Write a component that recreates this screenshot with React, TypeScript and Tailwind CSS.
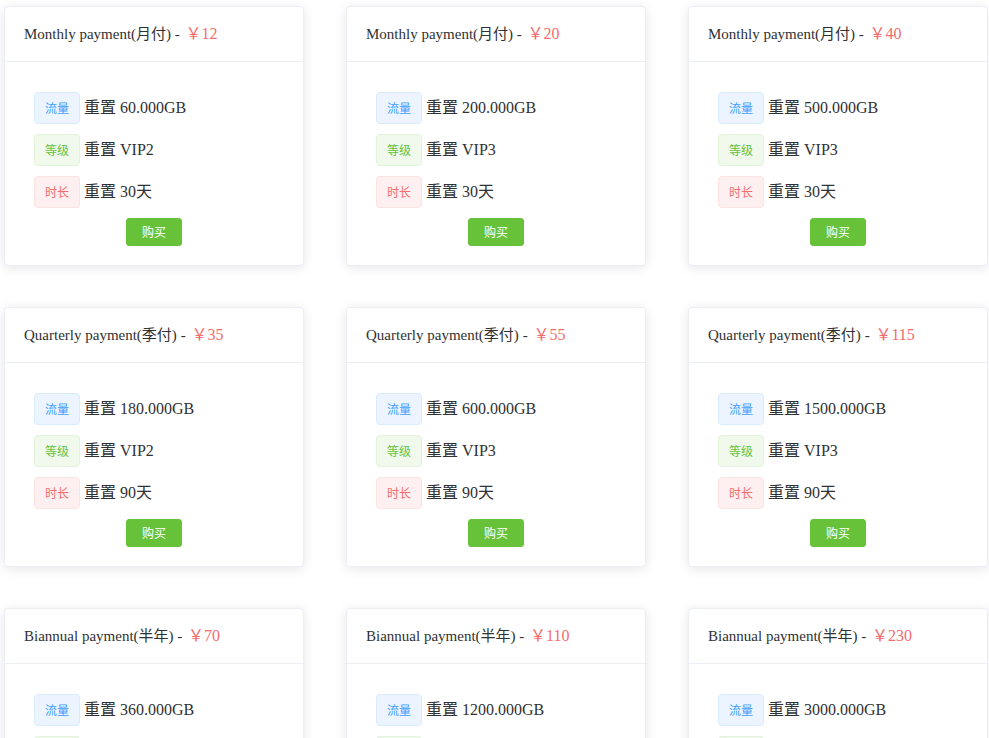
import React from "react";

interface Plan {
  period: string;
  price: number;
  traffic: string;
  level: string;
  days: number;
}

const plans: Plan[] = [
  { period: "Monthly payment(月付)", price: 12, traffic: "60.000GB", level: "VIP2", days: 30 },
  { period: "Monthly payment(月付)", price: 20, traffic: "200.000GB", level: "VIP3", days: 30 },
  { period: "Monthly payment(月付)", price: 40, traffic: "500.000GB", level: "VIP3", days: 30 },
  { period: "Quarterly payment(季付)", price: 35, traffic: "180.000GB", level: "VIP2", days: 90 },
  { period: "Quarterly payment(季付)", price: 55, traffic: "600.000GB", level: "VIP3", days: 90 },
  { period: "Quarterly payment(季付)", price: 115, traffic: "1500.000GB", level: "VIP3", days: 90 },
  { period: "Biannual payment(半年)", price: 70, traffic: "360.000GB", level: "VIP2", days: 180 },
  { period: "Biannual payment(半年)", price: 110, traffic: "1200.000GB", level: "VIP3", days: 180 },
  { period: "Biannual payment(半年)", price: 230, traffic: "3000.000GB", level: "VIP3", days: 180 },
];

const fontStack = { fontFamily: '"Liberation Serif", "Noto Sans CJK SC", serif' };

const Tag = ({ label, tone }: { label: string; tone: "blue" | "green" | "red" }) => {
  const cls =
    tone === "blue"
      ? "bg-[#ecf5ff] border-[#d9ecff] text-[#409eff]"
      : tone === "green"
      ? "bg-[#f0f9eb] border-[#e1f3d8] text-[#67c23a]"
      : "bg-[#fef0f0] border-[#fde2e2] text-[#f56c6c]";
  return (
    <span
      className={`inline-flex items-center justify-center h-8 px-[10px] text-xs border rounded ${cls}`}
      style={{ fontFamily: '"Noto Sans CJK SC", sans-serif' }}
    >
      {label}
    </span>
  );
};

const PlanCard = ({ plan }: { plan: Plan }) => (
  <div className="bg-white border border-[#ebeef5] rounded shadow-[0_2px_12px_0_rgba(0,0,0,0.1)] overflow-hidden">
    {/* header */}
    <div className="h-[55px] flex items-center px-[19px] border-b border-[#ebeef5] text-[15px] leading-[18px] text-[#303133] whitespace-pre">
      <span>{plan.period} - </span>
      <span className="text-base leading-[18px] text-[#f56c6c] ml-[2px]">￥{plan.price}</span>
    </div>
    {/* body */}
    <div className="pt-[30px] pb-[19px] pl-[29px] pr-5">
      <div className="flex flex-col gap-[10px]">
        <div className="flex items-center gap-1">
          <Tag label="流量" tone="blue" />
          <span className="text-base text-[#303133]">重置 {plan.traffic}</span>
        </div>
        <div className="flex items-center gap-1">
          <Tag label="等级" tone="green" />
          <span className="text-base text-[#303133]">重置 {plan.level}</span>
        </div>
        <div className="flex items-center gap-1">
          <Tag label="时长" tone="red" />
          <span className="text-base text-[#303133]">重置 {plan.days}天</span>
        </div>
      </div>
      <div className="flex justify-center mt-[10px] pr-[9px]">
        <button
          className="h-7 px-[15px] text-xs text-white bg-[#67c23a] border border-[#67c23a] rounded-[3px]"
          style={{ fontFamily: '"Noto Sans CJK SC", sans-serif' }}
        >
          购买
        </button>
      </div>
    </div>
  </div>
);

export default function App() {
  return (
    <div className="min-h-screen bg-white pt-[6px] pl-1 pr-[1px]" style={fontStack}>
      <div className="grid grid-cols-3 gap-x-[42px] gap-y-[41px]">
        {plans.map((p, i) => (
          <PlanCard key={i} plan={p} />
        ))}
      </div>
    </div>
  );
}
